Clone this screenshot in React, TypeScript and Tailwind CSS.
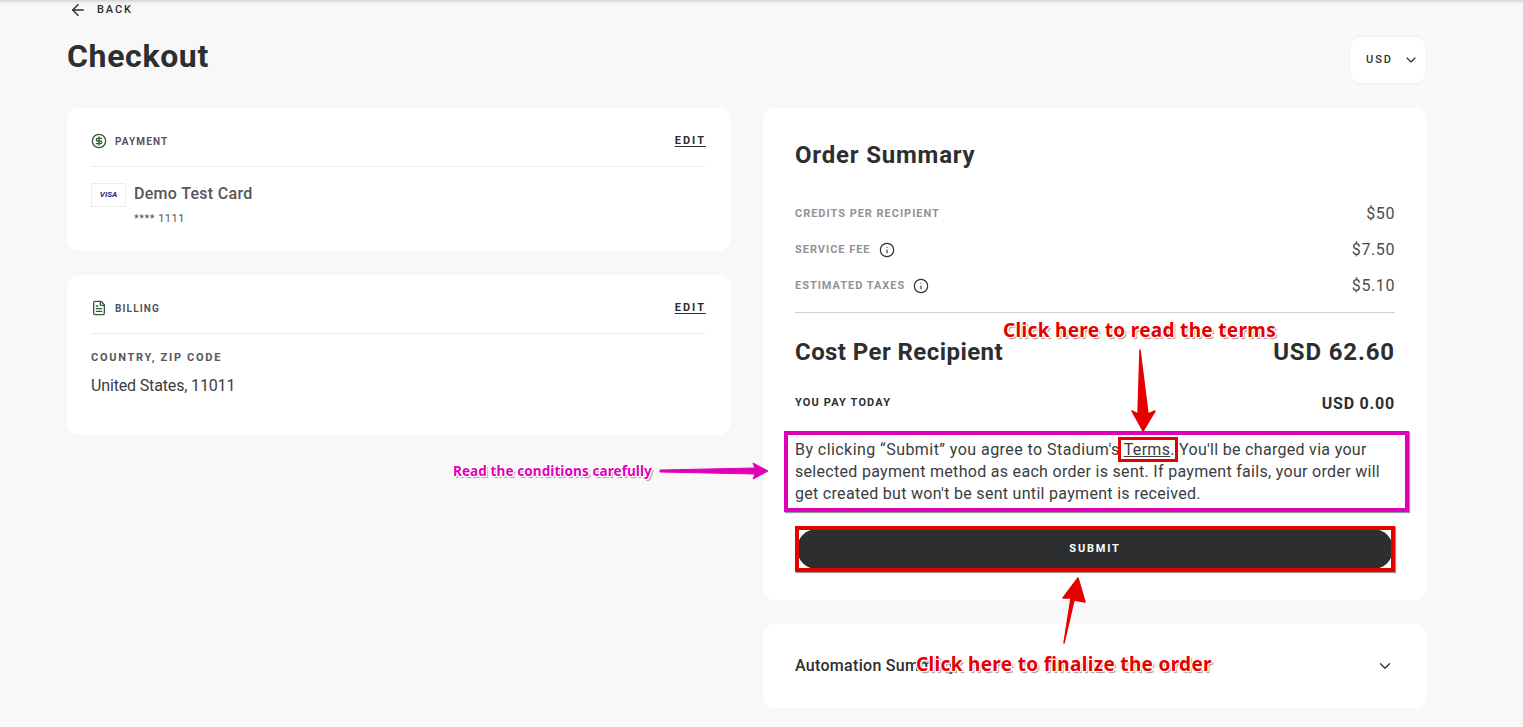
import { ArrowLeft, ChevronDown, CircleDollarSign, FileText, Info } from "lucide-react";

const calloutShadow =
  "[text-shadow:1px_0_0_#fff,-1px_0_0_#fff,0_1px_0_#fff,0_-1px_0_#fff,1px_1px_0_#fff,-1px_-1px_0_#fff,1px_-1px_0_#fff,-1px_1px_0_#fff,2px_2px_1px_#999]";

function SectionHead({ icon, label }: { icon: React.ReactNode; label: string }) {
  return (
    <div className="flex h-[59px] items-center justify-between border-b border-[#ececec] pt-2">
      <div className="flex items-center gap-2">
        {icon}
        <span className="text-[10px] font-bold tracking-[1.15px] text-[#55555a]">{label}</span>
      </div>
      <a className="text-[11px] font-bold tracking-[2px] text-[#2d2e30] underline underline-offset-2">EDIT</a>
    </div>
  );
}

function FeeRow({ label, value, info }: { label: string; value: string; info?: boolean }) {
  return (
    <div className="flex h-9 items-center justify-between">
      <div className="flex items-center gap-2">
        <span className="text-[11px] font-bold tracking-[0.97px] text-[#929296]">{label}</span>
        {info && <Info className="-mt-px h-4 w-4 text-[#2d2e30]" strokeWidth={1.75} />}
      </div>
      <span className="text-[16px] tracking-[0.6px] text-[#4b4b4e]">{value}</span>
    </div>
  );
}

export default function App() {
  return (
    <div className="relative h-[727px] overflow-hidden bg-[#f8f8f8] font-['Roboto',sans-serif] text-[#2d2e30]">
      {/* Top bar shadow */}
      <div className="h-px bg-[#d8d8d8] shadow-[0_1px_3px_rgba(0,0,0,0.25)]" />

      <main className="pl-[67px] pr-[96px]">
        <div className="flex h-[18px] items-center gap-[10px] pl-[2px] text-[11px] font-medium tracking-[1.9px]">
          <ArrowLeft className="h-[18px] w-[18px]" strokeWidth={2} />
          <span>BACK</span>
        </div>

        <div className="flex h-[89px] items-start justify-between">
          <h1 className="pt-[17px] text-[32px] leading-[40px] font-bold tracking-[0.65px]">Checkout</h1>
          <div className="mt-[17px] flex h-12 w-[78px] items-center gap-[10px] rounded-xl border border-[#f0f0f0] bg-white pl-4">
            <span className="text-[11px] font-medium tracking-[2px]">USD</span>
            <ChevronDown className="h-4 w-4" strokeWidth={1.75} />
          </div>
        </div>

        <div className="grid grid-cols-2 gap-8">
          <div className="flex flex-col gap-6">
            <section className="h-[143px] rounded-xl bg-white px-6">
              <div className="pr-px">
                <SectionHead
                  icon={<CircleDollarSign className="h-4 w-4 text-[#2f5f2f]" strokeWidth={2} />}
                  label="PAYMENT"
                />
              </div>
              <div className="flex gap-2 pt-4">
                <div className="flex h-6 w-[35px] items-center justify-center border border-[#ececec]">
                  <span className="text-[8px] font-bold italic text-[#252d7a]">VISA</span>
                </div>
                <div>
                  <p className="pt-px text-[16px] leading-5 font-medium tracking-[0.3px] text-[#55555a]">Demo Test Card</p>
                  <p className="pt-[8px] text-[11px] leading-[14px] tracking-[0.5px] text-[#55555a]">**** 1111</p>
                </div>
              </div>
            </section>

            <section className="h-[160px] rounded-xl bg-white px-6">
              <div className="pr-px">
                <SectionHead
                  icon={<FileText className="h-4 w-4 text-[#2f5f2f]" strokeWidth={2} />}
                  label="BILLING"
                />
              </div>
              <p className="pt-[17px] text-[11px] leading-[14px] font-bold tracking-[1.7px] text-[#55555a]">COUNTRY, ZIP CODE</p>
              <p className="pt-[11px] text-[16px] leading-5 tracking-[-0.15px] text-[#3c3c40]">United States, 11011</p>
            </section>
          </div>

          <div className="flex flex-col gap-6">
            <section className="h-[492px] rounded-xl bg-white px-8 pt-[31px]">
              <h2 className="text-[24px] leading-8 font-bold tracking-[0.8px]">Order Summary</h2>
              <div className="pt-[25px]">
                <FeeRow label="CREDITS PER RECIPIENT" value="$50" />
                <FeeRow label="SERVICE FEE" value="$7.50" info />
                <FeeRow label="ESTIMATED TAXES" value="$5.10" info />
              </div>
              <div className="mt-[8px] border-t border-[#cfcfcf]" />
              <div className="flex items-center justify-between pt-[23px]">
                <span className="text-[24px] leading-8 font-bold tracking-[0.43px]">Cost Per Recipient</span>
                <span className="text-[24px] leading-8 font-bold tracking-[0.85px]">USD 62.60</span>
              </div>
              <div className="flex items-start justify-between pt-[26px]">
                <span className="pt-[2px] text-[11px] leading-[14px] font-bold tracking-[1.15px]">YOU PAY TODAY</span>
                <span className="text-[16px] leading-5 font-bold tracking-[0.8px]">USD 0.00</span>
              </div>

              <div className="relative mt-[25px]">
                {/* Magenta callout frame */}
                <div className="pointer-events-none absolute -top-[8px] -right-[14px] -bottom-[7px] -left-[11px] border-4 border-[#e000b8] shadow-[1px_1px_1px_#999]" />
                <p className="text-[16px] leading-[22px] tracking-[0.3px] text-[#3c3c40]">
                  <span className="tracking-[0.44px]">By clicking “Submit” you agree to Stadium's</span>{" "}
                  <span className="relative">
                    <a className="underline underline-offset-1">Terms</a>.
                    <span className="pointer-events-none absolute -top-[3px] -right-[3px] -bottom-[3px] -left-[6px] border-[3px] border-[#e60000]" />
                  </span>{" "}
                  You'll be charged via your selected payment method as each order is sent. If payment fails, your order will get created but won't be sent until payment is received.
                </p>
              </div>

              <div className="relative mt-[24px] px-[2px]">
                <button className="h-10 w-full rounded-[20px] bg-[#2d2e30] text-[11px] font-bold tracking-[1.8px] text-white">
                  SUBMIT
                </button>
                <div className="pointer-events-none absolute -top-[3px] right-0 -bottom-[3px] left-0 border-4 border-[#e60000] shadow-[1px_1px_1px_#999]" />
              </div>
            </section>

            <section className="flex h-[84px] items-center justify-between rounded-xl bg-white px-8">
              <span className="text-[16px] font-medium tracking-[0.3px]">Automation Summary</span>
              <ChevronDown className="mr-px h-[18px] w-[18px]" strokeWidth={1.75} />
            </section>
          </div>
        </div>
      </main>

      {/* Annotation layer */}
      <svg className="pointer-events-none absolute top-0 left-0 h-[727px] w-[1523px]" viewBox="0 0 1523 727">
        <polygon points="1140,350 1148,414 1155,411 1143,431 1132,411 1138,414" fill="#e60000" stroke="#e60000" strokeLinejoin="round" strokeWidth="1.5" />
        <polygon points="1064,643 1074,600 1085,602 1078,578 1063,598 1071,598" fill="#e60000" stroke="#e60000" strokeLinejoin="round" strokeWidth="1.5" />
        <polygon points="660,470 755,468 753,463 768,471 753,479 755,474 660,472" fill="#e000b8" stroke="#e000b8" strokeLinejoin="round" />
      </svg>
      <span className={`absolute top-[318px] left-[1003px] font-['Noto_Sans',sans-serif] text-[19px] leading-[24px] font-bold tracking-[0.32px] whitespace-nowrap text-[#e60000] ${calloutShadow}`}>
        Click here to read the terms
      </span>
      <span className={`absolute top-[652px] left-[916px] font-['Noto_Sans',sans-serif] text-[19px] leading-[24px] font-bold tracking-[0.32px] whitespace-nowrap text-[#e60000] ${calloutShadow}`}>
        Click here to finalize the order
      </span>
      <span className={`absolute top-[462px] left-[453px] font-['Noto_Sans',sans-serif] text-[13.5px] leading-[18px] font-bold tracking-[0.1px] whitespace-nowrap text-[#e000b8] ${calloutShadow}`}>
        Read the conditions carefully
      </span>
    </div>
  );
}
